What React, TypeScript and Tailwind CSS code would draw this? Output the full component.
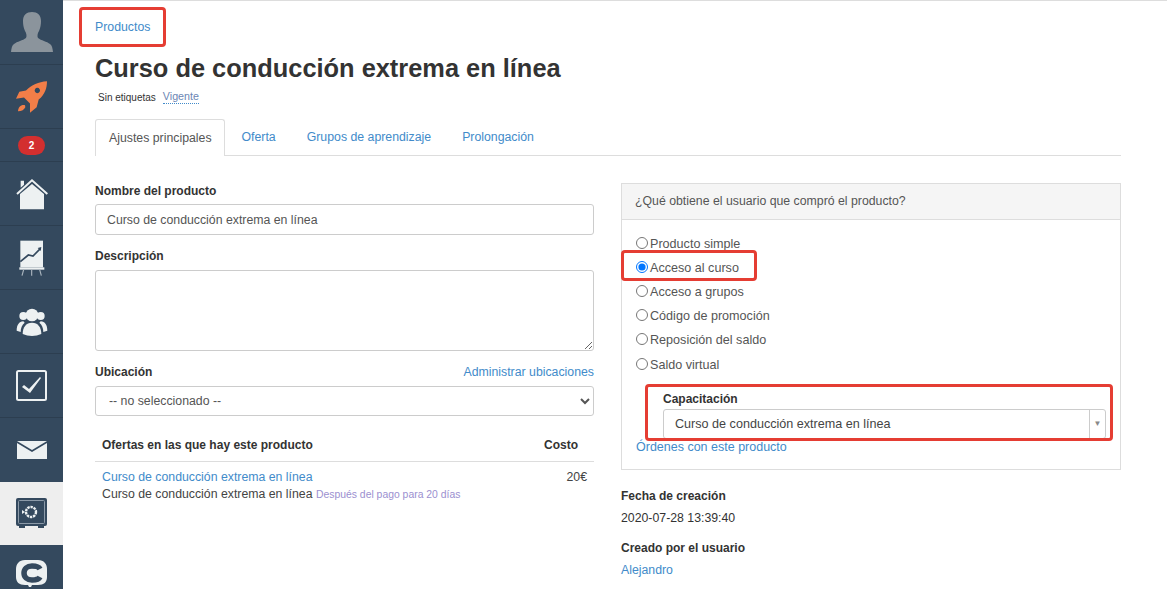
const font = "font-['Liberation_Sans',Arial,sans-serif]"

function Avatar() {
  return (
    <svg width="42" height="40" viewBox="0 0 42 40" fill="#8b949c">
      <path d="M21 0c-5.500 0-9 3-9 9 0 3 .5 7 2 10 1.500 2.500 2 5 1 7-3 2.500-9 3.500-12 6-2 1.500-2.500 4-3 8h42c-.5-4-1-6.500-3-8-3-2.500-9-3.500-12-6-1-2-.5-4.500 1-7 1.500-3 2-7 2-10 0-6-3.500-9-9-9z" />
    </svg>
  )
}

function Rocket() {
  return (
    <svg width="31" height="32" viewBox="48 240 93 95" fill="#f27e48">
      <path fillRule="evenodd" d="M141 240c-26 2-46 10-63 28l-20 4-10 21 24-4 18 18v28l20-17 6-23c19-15 25-35 25-55zM112 260a8 8 0 1 0 .01 0z" />
      <path d="M75 312c-13-2-20 6-21 18 11 0 19-5 22-12z" />
    </svg>
  )
}

function House() {
  return (
    <svg width="32" height="32" viewBox="48 533 96 96">
      <path fill="#edf1f2" d="M60 627V581l36-30 36 30v46z" />
      <path fill="none" stroke="#edf1f2" strokeWidth="6" d="M51 581l45-41 46 41" />
      <path fill="#edf1f2" d="M62 541h10v12l-10 9z" />
    </svg>
  )
}

function Board() {
  return (
    <svg width="26" height="36" viewBox="56 718 78 108">
      <path fill="#edf1f2" d="M60 720h68v80H60z" />
      <path fill="none" stroke="#34495e" strokeWidth="5" d="M60 783l24-20 14 3 22-22" />
      <path fill="#34495e" d="M112 742l11-3-2 12z" />
      <path fill="#edf1f2" d="M57 800h75v7H57z" />
      <path fill="none" stroke="#a9b4bd" strokeWidth="3.500" d="M70 807l-5 18M94 807v18M118 807l5 18" />
    </svg>
  )
}

function People() {
  return (
    <svg width="32" height="28" viewBox="46 48 96 84" fill="#edf1f2">
      <circle cx="68" cy="72" r="12" />
      <circle cx="120" cy="72" r="12" />
      <path d="M48 116c0-16 7-28 20-28l4 4c-8 6-12 16-12 28zM140 116c0-16-7-28-20-28l-4 4c8 6 12 16 12 28z" />
      <circle cx="94" cy="69" r="19" />
      <path d="M66 126c0-20 10-34 28-34s28 14 28 34c-18 8-38 8-56 0z" />
    </svg>
  )
}

function Check() {
  return (
    <svg width="31" height="31" viewBox="0 0 31 31">
      <rect x="1" y="1" width="29" height="29" rx="1.500" fill="none" stroke="#edf1f2" strokeWidth="2" />
      <path fill="#edf1f2" d="M6 17l2-2 5 4L24 7l1 1-11 15z" />
    </svg>
  )
}

function Mail() {
  return (
    <svg width="30" height="18" viewBox="0 0 30 18" fill="#edf1f2">
      <path d="M0 0h30L15 9z" />
      <path d="M0 2v16h30V2L15 11z" />
    </svg>
  )
}

function Safe() {
  return (
    <svg width="31" height="31" viewBox="0 0 31 31">
      <rect y="0" width="31" height="28" rx="2" fill="#34495e" />
      <path fill="#34495e" d="M3 27h6v3H3zM22 27h6v3h-6z" />
      <rect x="2.500" y="2.500" width="26" height="23" rx="1" fill="none" stroke="#8c9aa8" strokeWidth="1" />
      <circle cx="15" cy="14" r="5" fill="none" stroke="#edf1f2" strokeWidth="2.400" strokeDasharray="2.400 .8" />
      <path fill="#edf1f2" d="M6 12l3 2-3 2z" />
    </svg>
  )
}

function LogoC() {
  return (
    <svg width="31" height="28" viewBox="0 0 31 28">
      <path fill="#edf1f2" d="M9 0h13c6 0 9 4 9 9v8c0 5-3 8-9 8h-6l-1 2h-2l-1-2H9c-6 0-9-3-9-8V9c0-5 3-9 9-9z" />
      <path fill="none" stroke="#34495e" strokeWidth="5.500" d="M24 9c-1-2-3-3-8-3-5 0-8 3-8 7s3 7 8 7c5 0 7-1 8-3" />
    </svg>
  )
}

function Badge() {
  return (
    <span className="flex h-[19px] w-[27px] items-center justify-center rounded-full bg-[#d32f2f] text-[10px] font-bold text-white">2</span>
  )
}

function Sidebar() {
  const cell = 'flex w-full shrink-0 items-center justify-center border-b border-[#2c3e50]'
  return (
    <aside className="flex h-[589px] w-[63px] shrink-0 flex-col overflow-hidden bg-[#34495e]">
      <div className={`${cell} h-[65px]`}><Avatar /></div>
      <div className={`${cell} h-[64px]`}><Rocket /></div>
      <div className={`${cell} h-[33px]`}><Badge /></div>
      <div className={`${cell} h-[64px]`}><House /></div>
      <div className={`${cell} h-[64px]`}><Board /></div>
      <div className={`${cell} h-[64px]`}><People /></div>
      <div className={`${cell} h-[64px]`}><Check /></div>
      <div className="flex h-[64px] w-full shrink-0 items-center justify-center"><Mail /></div>
      <div className="flex h-[63px] w-full shrink-0 items-center justify-center bg-[#eeeeee]"><Safe /></div>
      <div className="flex w-full shrink-0 justify-center pt-[15px]"><LogoC /></div>
    </aside>
  )
}

const radios = ['Producto simple', 'Acceso al curso', 'Acceso a grupos', 'Código de promoción', 'Reposición del saldo', 'Saldo virtual']

export default function App() {
  return (
    <div className={`${font} flex h-[589px] w-[1167px] overflow-hidden bg-white text-[12.3px] text-[#333333]`}>
      <Sidebar />
      <main className="relative min-w-0 flex-1 border-t border-[#dddddd] pl-[32px] pr-[46px]">
        <div className="absolute left-[16px] top-[6px] h-[40px] w-[87px] rounded-[4px] border-[3px] border-[#e53d33]" />
        <a className="mt-[18px] block h-[16px] leading-[16px] text-[#428bca]">Productos</a>
        <h1 className="mt-[17px] h-[32px] text-[25.4px] font-bold leading-[32px] text-[#333333]">Curso de conducción extrema en línea</h1>
        <div className="mt-[5px] flex h-[16px] items-center pl-[3px] text-[10px] text-[#333333]">
          <span>Sin etiquetas</span>
          <span className="ml-[7px] border-b border-dotted border-[#428bca] text-[10.7px] leading-[13px] text-[#6b86b4]">Vigente</span>
        </div>
        <nav className="mt-[14px] flex h-[37px] border-b border-[#dddddd] text-[#428bca]">
          <a className="h-[37px] rounded-t-[3px] border border-b-0 border-[#dddddd] bg-white pl-[13px] pr-[12px] pt-[9px] text-[#555555]">Ajustes principales</a>
          <a className="px-[17px] pt-[9px]">Oferta</a>
          <a className="px-[14px] pt-[9px]">Grupos de aprendizaje</a>
          <a className="px-[17px] pt-[9px]">Prolongación</a>
        </nav>
        <div className="mt-[27px] flex items-start gap-[27px]">
          <section className="w-[499px] shrink-0">
            <label className="block h-[15px] pt-[1px] text-[12px] font-bold leading-[15px]">Nombre del producto</label>
            <input readOnly value="Curso de conducción extrema en línea" className="mt-[6px] block h-[31px] w-full rounded-[3px] border border-[#cccccc] px-[11px] text-[#555555]" />
            <label className="mt-[13px] block h-[15px] pt-[1px] text-[12px] font-bold leading-[15px]">Descripción</label>
            <textarea readOnly className="mt-[7px] block h-[81px] w-full rounded-[3px] border border-[#cccccc] px-[11px]" />
            <div className="mt-[14px] flex h-[15px] items-center justify-between leading-[15px]">
              <label className="text-[12px] font-bold">Ubicación</label>
              <a className="text-[#428bca]">Administrar ubicaciones</a>
            </div>
            <select className="mt-[6px] block h-[30px] w-full rounded-[3px] border border-[#cccccc] bg-white px-[9px] text-[#555555]">
              <option>-- no seleccionado --</option>
            </select>
            <table className="mt-[11px] w-full">
              <thead>
                <tr className="h-[34px] border-b border-[#dddddd] text-left text-[12px] font-bold">
                  <th className="pl-[7px] pt-[2px]">Ofertas en las que hay este producto</th>
                  <th className="w-[57px] pl-[7px] pt-[2px]">Costo</th>
                </tr>
              </thead>
              <tbody>
                <tr className="align-top">
                  <td className="pl-[7px] pt-[7px] leading-[17px] text-[#444444]">
                    <a className="block text-[#428bca]">Curso de conducción extrema en línea</a>
                    <span>Curso de conducción extrema en línea</span>{' '}
                    <span className="text-[10.4px] text-[#9b8fd0]">Después del pago para 20 días</span>
                  </td>
                  <td className="pr-[7px] pt-[7px] text-right leading-[17px] text-[#444444]">20€</td>
                </tr>
              </tbody>
            </table>
          </section>
          <section className="w-[500px] shrink-0">
            <div className="relative h-[287px] border border-[#dddddd]">
              <div className="h-[36px] border-b border-[#dddddd] bg-[#f5f5f5] px-[13px] leading-[34px] text-[#555555]">¿Qué obtiene el usuario que compró el producto?</div>
              <div className="px-[14px] pt-[12px] text-[12.6px]">
                {radios.map((r, i) => (
                  <label key={r} className="flex h-[24.2px] items-center gap-[2px] text-[#555555]">
                    <input type="radio" name="kind" readOnly checked={i === 1} className="m-0 mb-[3px] h-[12px] w-[12px]" />
                    {r}
                  </label>
                ))}
                <div className="ml-[27px] mt-[15px]">
                  <label className="block h-[15px] text-[12px] font-bold leading-[15px]">Capacitación</label>
                  <div className="mt-[2px] flex h-[30px] items-center justify-between rounded-[3px] border border-[#cccccc] pl-[11px] text-[#444444]">
                    <span>Curso de conducción extrema en línea</span>
                    <span className="flex h-full w-[16px] items-center justify-center border-l border-[#cccccc] text-[8px] text-[#888888]">▼</span>
                  </div>
                </div>
                <a className="-mt-[1px] block text-[12.5px] text-[#428bca]">Órdenes con este producto</a>
              </div>
              <div className="absolute -left-[1px] top-[66px] h-[31px] w-[136px] rounded-[4px] border-[3px] border-[#e53d33]" />
              <div className="absolute left-[23px] top-[200px] h-[57px] w-[468px] rounded-[4px] border-[3px] border-[#e53d33]" />
            </div>
            <div className="mt-[19px] text-[12px] font-bold leading-[15px]">Fecha de creación</div>
            <div className="mt-[7px] leading-[15px]">2020-07-28 13:39:40</div>
            <div className="mt-[15px] text-[12px] font-bold leading-[15px]">Creado por el usuario</div>
            <a className="mt-[7px] block leading-[15px] text-[#428bca]">Alejandro</a>
          </section>
        </div>
      </main>
    </div>
  )
}
